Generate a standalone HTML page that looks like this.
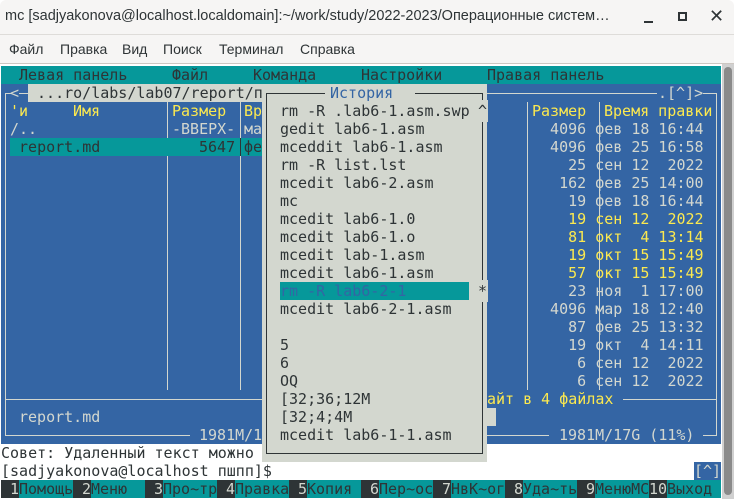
<!DOCTYPE html>
<html><head><meta charset="utf-8"><style>
*{margin:0;padding:0;box-sizing:border-box}
body{width:734px;height:499px;overflow:hidden;background:#fff;position:relative;font-family:"DejaVu Sans Mono",monospace;font-size:15px}
.a{position:absolute;white-space:pre;line-height:18px;height:18px}
.b{position:absolute}
.ui{font-family:"Liberation Sans","DejaVu Sans",sans-serif;position:absolute;white-space:pre;color:#2e3436}
.w{color:#d3d7cf}.y{color:#fce94f}.k{color:#2e3436}
.hl{position:absolute;height:1px;background:#d3d7cf}
.vl{position:absolute;width:1px;background:#d3d7cf}
.dh{position:absolute;height:1px;background:#2e3436}
.dv{position:absolute;width:1px;background:#2e3436}
</style></head><body>
<!-- title bar -->
<div class="b" style="left:0;top:0;width:734px;height:34px;background:#f6f5f4;border-radius:6px 6px 0 0"></div>
<div class="ui" style="left:5px;top:8px;font-size:14.5px">mc [sadjyakonova@localhost.localdomain]:~/work/study/2022-2023/Операционные систем…</div>
<div class="b" style="left:644px;top:21px;width:9px;height:2px;background:#2e3436"></div>
<div class="b" style="left:678px;top:12px;width:9px;height:9px;border:2px solid #2e3436"></div>
<div class="ui" style="left:709px;top:6px;font-size:18px">✕</div>
<!-- menu -->
<div class="b" style="left:0;top:34px;width:734px;height:30px;background:#f6f5f4;border-top:1px solid #dedcd9;border-bottom:1px solid #cdc7c2"></div>
<div class="ui" style="left:9px;top:41px;font-size:14px">Файл</div>
<div class="ui" style="left:60px;top:41px;font-size:14px">Правка</div>
<div class="ui" style="left:122px;top:41px;font-size:14px">Вид</div>
<div class="ui" style="left:163px;top:41px;font-size:14px">Поиск</div>
<div class="ui" style="left:219px;top:41px;font-size:14px">Терминал</div>
<div class="ui" style="left:300px;top:41px;font-size:14px">Справка</div>
<!-- scrollbar -->
<div class="b" style="left:722px;top:64px;width:12px;height:435px;background:#d0d0d0"></div>
<div class="b" style="left:724px;top:67px;width:8px;height:428px;background:#8a8a8a;border-radius:4px"></div>
<!-- mc top menu -->
<div class="b" style="left:1px;top:66px;width:720px;height:18px;background:#06989a"></div>
<div class="a k" style="left:19px;top:66px">Левая панель</div>
<div class="a k" style="left:172px;top:66px">Файл</div>
<div class="a k" style="left:253px;top:66px">Команда</div>
<div class="a k" style="left:361px;top:66px">Настройки</div>
<div class="a k" style="left:487px;top:66px">Правая панель</div>
<!-- panels bg -->
<div class="b" style="left:1px;top:84px;width:720px;height:360px;background:#3465a4"></div>
<!-- left panel -->
<div class="vl" style="left:5px;top:93px;height:343px"></div>
<div class="hl" style="left:5px;top:93px;width:6px"></div>
<div class="a w" style="left:10px;top:84px">&lt;</div>
<div class="hl" style="left:19px;top:93px;width:9px"></div>
<div class="b" style="left:28px;top:84px;width:236px;height:18px;background:#d3d7cf"></div>
<div class="a k" style="left:28px;top:84px"> ...ro/labs/lab07/report/п</div>
<div class="vl" style="left:167px;top:102px;height:288px"></div>
<div class="vl" style="left:240px;top:102px;height:288px"></div>
<div class="a y" style="left:10px;top:102px">'и</div>
<div class="a y" style="left:73px;top:102px">Имя</div>
<div class="a y" style="left:172px;top:102px">Размер</div>
<div class="a y" style="left:244px;top:102px">Вр</div>
<div class="a w" style="left:10px;top:120px">/..</div>
<div class="a w" style="left:172px;top:120px">-ВВЕРХ-</div>
<div class="a w" style="left:244px;top:120px">ма</div>
<div class="b" style="left:10px;top:138px;width:254px;height:18px;background:#06989a"></div>
<div class="a k" style="left:10px;top:138px"> report.md</div>
<div class="a k" style="left:199px;top:138px">5647</div>
<div class="vl" style="left:240px;top:138px;height:18px;background:#2e3436"></div>
<div class="a k" style="left:244px;top:138px">фе</div>
<div class="hl" style="left:5px;top:399px;width:260px"></div>
<div class="a w" style="left:19px;top:408px">report.md</div>
<div class="hl" style="left:5px;top:435px;width:185px"></div>
<div class="a w" style="left:199px;top:426px">1981M/1</div>
<!-- right panel -->
<div class="hl" style="left:487px;top:93px;width:170px"></div>
<div class="a w" style="left:658px;top:84px">.[^]&gt;</div>
<div class="hl" style="left:703px;top:93px;width:14px"></div>
<div class="vl" style="left:716px;top:93px;height:343px"></div>
<div class="vl" style="left:527px;top:102px;height:288px"></div>
<div class="vl" style="left:599px;top:102px;height:288px"></div>
<div class="a y" style="left:532px;top:102px">Размер</div>
<div class="a y" style="left:604px;top:102px">Время правки</div>
<div class="a w" style="left:532px;top:120px">  4096 фев 18 16:44</div>
<div class="a w" style="left:532px;top:138px">  4096 фев 25 16:58</div>
<div class="a w" style="left:532px;top:156px">    25 сен 12  2022</div>
<div class="a w" style="left:532px;top:174px">   162 фев 25 14:00</div>
<div class="a w" style="left:532px;top:192px">    19 фев 18 16:44</div>
<div class="a y" style="left:532px;top:210px">    19 сен 12  2022</div>
<div class="a y" style="left:532px;top:228px">    81 окт  4 13:14</div>
<div class="a y" style="left:532px;top:246px">    19 окт 15 15:49</div>
<div class="a y" style="left:532px;top:264px">    57 окт 15 15:49</div>
<div class="a w" style="left:532px;top:282px">    23 ноя  1 17:00</div>
<div class="a w" style="left:532px;top:300px">  4096 мар 18 12:40</div>
<div class="a w" style="left:532px;top:318px">    87 фев 25 13:32</div>
<div class="a w" style="left:532px;top:336px">    19 окт  4 14:11</div>
<div class="a w" style="left:532px;top:354px">     6 сен 12  2022</div>
<div class="a w" style="left:532px;top:372px">     6 сен 12  2022</div>
<div class="a y" style="left:487px;top:390px">айт в 4 файлах</div>
<div class="hl" style="left:623px;top:399px;width:94px"></div>
<div class="b" style="left:487px;top:408px;width:9px;height:18px;background:#d3d7cf"></div>
<div class="hl" style="left:487px;top:435px;width:62px"></div>
<div class="a w" style="left:559px;top:426px">1981M/17G (11%)</div>
<div class="hl" style="left:703px;top:435px;width:14px"></div>
<!-- dialog -->
<div class="b" style="left:262px;top:84px;width:225px;height:378px;background:#d3d7cf"></div>
<div class="dh" style="left:267px;top:93px;width:58px"></div>
<div class="a" style="left:330px;top:84px;color:#3465a4">История</div>
<div class="dh" style="left:415px;top:93px;width:68px"></div>
<div class="dv" style="left:266px;top:93px;height:360px"></div>
<div class="dv" style="left:482px;top:93px;height:360px"></div>
<div class="dh" style="left:266px;top:453px;width:217px"></div>
<div class="b" style="left:478px;top:100px;width:10px;height:22px;background:#d3d7cf"></div>
<div class="a k" style="left:478px;top:102px">^</div>
<div class="b" style="left:478px;top:280px;width:10px;height:22px;background:#d3d7cf"></div>
<div class="a k" style="left:478px;top:282px">*</div>
<div class="b" style="left:280px;top:282px;width:189px;height:18px;background:#06989a"></div>
<div class="a k" style="left:280px;top:102px">rm -R .lab6-1.asm.swp</div>
<div class="a k" style="left:280px;top:120px">gedit lab6-1.asm</div>
<div class="a k" style="left:280px;top:138px">mceddit lab6-1.asm</div>
<div class="a k" style="left:280px;top:156px">rm -R list.lst</div>
<div class="a k" style="left:280px;top:174px">mcedit lab6-2.asm</div>
<div class="a k" style="left:280px;top:192px">mc</div>
<div class="a k" style="left:280px;top:210px">mcedit lab6-1.0</div>
<div class="a k" style="left:280px;top:228px">mcedit lab6-1.o</div>
<div class="a k" style="left:280px;top:246px">mcedit lab-1.asm</div>
<div class="a k" style="left:280px;top:264px">mcedit lab6-1.asm</div>
<div class="a" style="left:280px;top:282px;color:#3465a4">rm -R lab6-2-1</div>
<div class="a k" style="left:280px;top:300px">mcedit lab6-2-1.asm</div>
<div class="a k" style="left:280px;top:336px">5</div>
<div class="a k" style="left:280px;top:354px">6</div>
<div class="a k" style="left:280px;top:372px">OQ</div>
<div class="a k" style="left:280px;top:390px">[32;36;12M</div>
<div class="a k" style="left:280px;top:408px">[32;4;4M</div>
<div class="a k" style="left:280px;top:426px">mcedit lab6-1-1.asm</div>
<!-- bottom -->
<div class="a k" style="left:1px;top:444px">Совет: Удаленный текст можно</div>
<div class="a k" style="left:1px;top:462px">[sadjyakonova@localhost пшпп]$</div>
<div class="b" style="left:694px;top:462px;width:27px;height:18px;background:#3465a4"></div>
<div class="a w" style="left:694px;top:462px">[^]</div>
<div class="b" style="left:1px;top:480px;width:720px;height:18px;background:#06989a"></div>
<div class="b" style="left:1px;top:480px;width:18px;height:18px;background:#2e3436"></div>
<div class="b" style="left:73px;top:480px;width:18px;height:18px;background:#2e3436"></div>
<div class="b" style="left:145px;top:480px;width:18px;height:18px;background:#2e3436"></div>
<div class="b" style="left:217px;top:480px;width:18px;height:18px;background:#2e3436"></div>
<div class="b" style="left:289px;top:480px;width:18px;height:18px;background:#2e3436"></div>
<div class="b" style="left:361px;top:480px;width:18px;height:18px;background:#2e3436"></div>
<div class="b" style="left:433px;top:480px;width:18px;height:18px;background:#2e3436"></div>
<div class="b" style="left:505px;top:480px;width:18px;height:18px;background:#2e3436"></div>
<div class="b" style="left:577px;top:480px;width:18px;height:18px;background:#2e3436"></div>
<div class="b" style="left:649px;top:480px;width:18px;height:18px;background:#2e3436"></div>
<div class="a w" style="left:1px;top:480px"> 1</div><div class="a k" style="left:19px;top:480px">Помощь</div>
<div class="a w" style="left:73px;top:480px"> 2</div><div class="a k" style="left:91px;top:480px">Меню</div>
<div class="a w" style="left:145px;top:480px"> 3</div><div class="a k" style="left:163px;top:480px">Про~тр</div>
<div class="a w" style="left:217px;top:480px"> 4</div><div class="a k" style="left:235px;top:480px">Правка</div>
<div class="a w" style="left:289px;top:480px"> 5</div><div class="a k" style="left:307px;top:480px">Копия</div>
<div class="a w" style="left:361px;top:480px"> 6</div><div class="a k" style="left:379px;top:480px">Пер~ос</div>
<div class="a w" style="left:433px;top:480px"> 7</div><div class="a k" style="left:451px;top:480px">НвК~ог</div>
<div class="a w" style="left:505px;top:480px"> 8</div><div class="a k" style="left:523px;top:480px">Уда~ть</div>
<div class="a w" style="left:577px;top:480px"> 9</div><div class="a k" style="left:595px;top:480px">МенюМС</div>
<div class="a w" style="left:649px;top:480px">10</div><div class="a k" style="left:667px;top:480px">Выход</div>
</body></html>
